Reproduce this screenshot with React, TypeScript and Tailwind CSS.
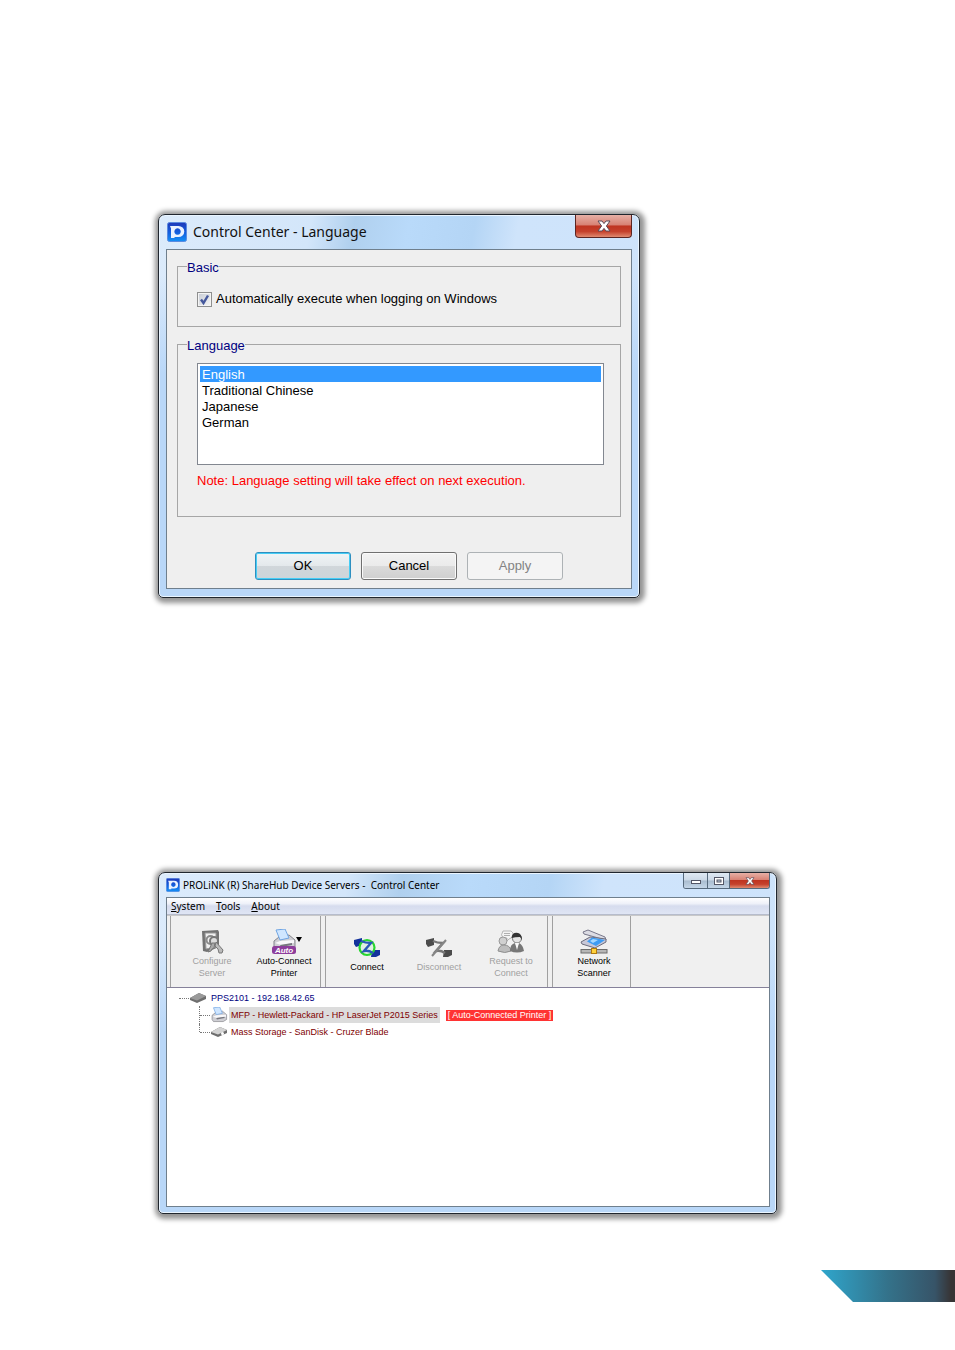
import type { ReactNode } from "react";

const windowFrame =
  "w-full border border-[#20262e] rounded-t-[7px] rounded-b-[5px] bg-[linear-gradient(180deg,transparent_0,transparent_60px,#b9d7f8_160px,#b9d7f8_100%),linear-gradient(100deg,#dcebfb_0%,#d3e6fa_28%,#b0d0ee_36%,#b9dafa_46%,#b4d5f5_58%,#cfe4fb_66%,#cde3fb_100%)] shadow-[inset_0_0_0_1px_#eaf5ff,1px_1px_5px_4px_rgba(0,0,0,0.42)]";

function LogoIcon({ className }: { className: string }) {
  return (
    <svg viewBox="0 0 20 20" className={className} aria-hidden="true">
      <defs>
        <linearGradient id="logoBlue" x1="0" y1="0" x2="0" y2="1">
          <stop offset="0" stopColor="#2038b8" />
          <stop offset="0.55" stopColor="#1260e0" />
          <stop offset="1" stopColor="#1590f5" />
        </linearGradient>
      </defs>
      <rect x="0.5" y="0.5" width="19" height="19" rx="2" fill="url(#logoBlue)" stroke="#5a8be0" />
      <path
        fill="#e9f1ff"
        fillRule="evenodd"
        d="M3 4 H11.500 A5.800 5.500 0 0 1 11.500 15 H7.500 V16 H4 V6.500 Z M10.500 6.200 A3.200 3.300 0 1 0 10.600 6.200 Z"
      />
    </svg>
  );
}

function CloseGlyph({ className }: { className: string }) {
  return (
    <svg viewBox="0 0 14 12" className={className} aria-hidden="true">
      <path
        d="M1 1 H5 L7 3.6 L9 1 H13 L9.4 6 L13 11 H9 L7 8.4 L5 11 H1 L4.6 6 Z"
        fill="#fff"
        stroke="#5a4a58"
        strokeWidth="1"
      />
    </svg>
  );
}

function ConfigureIcon() {
  return (
    <svg viewBox="0 0 26 26" className="size-[26px]" aria-hidden="true">
      <path d="M3 2 L19 1 L20 3 V18 L8 23 L4 22 Z" fill="#737373" />
      <path d="M6 4 H17 V18 L7 20 Z" fill="#efefef" stroke="#999" />
      <circle cx="11.5" cy="11" r="4" fill="none" stroke="#8a8a8a" strokeWidth="2" />
      <circle cx="15" cy="12" r="4" fill="#ddd" stroke="#777" strokeWidth="2" />
      <path d="M13 14 L9 23 L12 22 L13 20 L15 19 L16 14 Z" fill="#a9a9a9" stroke="#777" />
      <path d="M17 13 L24 21 L23 24 L20 24 L19 20 L16 17 Z" fill="#bbb" stroke="#777" />
    </svg>
  );
}

function PrinterShape() {
  return (
    <>
      <path d="M3 12 L8 8 L18 6 L24 11 V18 L19 21 H5 L3 18 Z" fill="#cfcfd4" stroke="#85858c" />
      <path d="M5 1 L14 0 L18 9 L9 11 Z" fill="#cfe6ff" stroke="#6fa4e2" />
      <path d="M4 14 L9 12 L23 11 L23 14 L10 16 Z" fill="#f8f8fa" />
      <path d="M9 16 L21 14 V16 L10 18 Z" fill="#77777f" />
    </>
  );
}

function AutoPrinterIcon() {
  return (
    <svg viewBox="0 0 26 26" className="size-[26px]" aria-hidden="true">
      <PrinterShape />
      <rect x="1" y="17" width="24" height="8" rx="2.5" fill="#8d3d9c" />
      <text x="13" y="24" textAnchor="middle" fill="#fff" className="font-['Liberation_Sans',sans-serif] text-[8px] font-bold italic">
        Auto
      </text>
    </svg>
  );
}

function LinkIcon({ connected }: { connected: boolean }) {
  const plug = connected ? "#12329c" : "#4c4c4c";
  return (
    <svg viewBox="0 0 28 26" className="h-[26px] w-[28px]" aria-hidden="true">
      <path d="M1 5 L9 3 V10 L3 12 L1 9 Z" fill={plug} />
      <path d="M19 15 L27 15 V20 L23 22 H18 Z" fill={plug} />
      {connected && <circle cx="14" cy="12.500" r="7.500" fill="#dff0e2" stroke="#27d62f" strokeWidth="2.200" />}
      <path
        d="M8 6 C12 8 15 8 18 8 L11 16 C15 15 17 16 20 18"
        fill="none"
        stroke={connected ? "#2a58b8" : "#777"}
        strokeWidth="2.400"
      />
      {!connected && <path d="M21 5 L7 21" stroke="#858585" strokeWidth="2" />}
    </svg>
  );
}

function RequestIcon() {
  return (
    <svg viewBox="0 0 28 26" className="h-[26px] w-[28px]" aria-hidden="true">
      <path d="M6 2 H14 Q17 3 16 8 L12 10 L10 12 V9 H6 Q3 6 6 2 Z" fill="#f4f4f4" stroke="#b5b5b5" />
      <path d="M7 4.500 H13 M7 6.500 H13" stroke="#b0b0b0" />
      <circle cx="6" cy="12" r="4" fill="#d0d0d0" stroke="#999" />
      <path d="M1 22 Q2 16 7 16 Q13 16 14 22 Q8 25 1 22 Z" fill="#bdbdbd" stroke="#8f8f8f" />
      <circle cx="20" cy="9.500" r="4.500" fill="#e4e4e4" stroke="#777" />
      <path d="M14.500 9 Q15 3 21 4 Q25 5 25 11 L23 8 Q18 8 14.500 9 Z" fill="#333" />
      <path d="M13 22 Q13 15 18 14 L20 18 L22 14 Q26 16 27 22 Q20 25 13 22 Z" fill="#777" />
      <path d="M18 14 L20 21 L22 14 Z" fill="#f8f8f8" />
    </svg>
  );
}

function ScannerIcon() {
  return (
    <svg viewBox="0 0 28 26" className="h-[26px] w-[28px]" aria-hidden="true">
      <path d="M3 3 L8 1 L25 8 L26 11 L22 10 L4 5 Z" fill="#dcdce4" stroke="#77778a" />
      <path d="M1 13 L10 8 L26 10 L26 13 L15 19 L2 15 Z" fill="#c8c8d8" stroke="#6c6c7c" />
      <path d="M7 12.500 L12 8.500 L25 11 L16 17 Z" fill="#3e9cf4" />
      <path d="M10 12 L13 10 L18 11 L13 14 Z" fill="#a6d8ff" />
      <rect x="1" y="20.500" width="26" height="3.500" fill="#b7b7b7" stroke="#6d6d6d" />
      <rect x="11.500" y="19.500" width="5" height="5" fill="#ffd23c" stroke="#b07a10" />
    </svg>
  );
}

function DriveIcon({ small = false }: { small?: boolean }) {
  return (
    <svg viewBox="0 0 18 12" className="h-[12px] w-[18px] shrink-0" aria-hidden="true">
      <path d="M1 6 L10 1 L17 4 V7 L8 11 L1 8 Z" fill="#6e6e6e" />
      <path d="M1 6 L10 1 L17 4 L8 8.500 Z" fill={small ? "#d4d4d4" : "#9a9a9a"} />
      {small && <circle cx="12.500" cy="7.500" r="1.500" fill="#fff" />}
    </svg>
  );
}

function GroupBox({ title, className, children }: { title: string; className: string; children: ReactNode }) {
  return (
    <fieldset className={`min-w-0 border border-[#a6a6a6] pl-[19px] pr-[16px] ${className}`}>
      <legend className="-ml-[10px] pt-1 text-[13px] leading-[16px] text-[#00007f]">{title}</legend>
      {children}
    </fieldset>
  );
}

const dialogButton = "h-[28px] w-[96px] rounded-[3px] border text-[13px] leading-[16px]";

function LanguageDialog() {
  return (
    <section
      aria-label="Control Center - Language"
      className={`${windowFrame} flex max-w-[482px] flex-col px-[7px] pb-[8px]`}
    >
      <header className="flex h-[34px] items-start justify-between">
        <div className="flex h-full items-center gap-[6px] pl-[1px]">
          <LogoIcon className="size-[20px]" />
          <h1 className="font-['Noto_Sans',sans-serif] text-[14px] leading-[18px] text-[#111]">
            Control Center - Language
          </h1>
        </div>
        <button
          type="button"
          aria-label="Close"
          className="flex h-[23px] w-[57px] items-center justify-center rounded-b-[4px] border border-t-0 border-[#5c2522] bg-[linear-gradient(#e7b0a6_0%,#d88274_45%,#bf3421_50%,#c5412c_75%,#e08a70_100%)]"
        >
          <CloseGlyph className="h-[12px] w-[14px]" />
        </button>
      </header>
      <div className="border border-[#6f7f8d] bg-[#efefef] pr-[10px] pl-[10px] pt-[6px] pb-[8px]">
        <GroupBox title="Basic" className="h-[71px]">
          <label className="flex items-center gap-[4px] pt-[15px] text-[13px] leading-[16px] text-black">
            <span className="grid size-[15px]">
              <input
                type="checkbox"
                defaultChecked
                className="peer col-start-1 row-start-1 size-[15px] appearance-none border border-[#8e8f8f] bg-[linear-gradient(135deg,#c6cbd4,#f6f6f6)] shadow-[inset_0_0_0_1px_#f4f4f4]"
              />
              <svg
                viewBox="0 0 15 15"
                className="pointer-events-none invisible col-start-1 row-start-1 size-[15px] peer-checked:visible"
                aria-hidden="true"
              >
                <path d="M4 7.500 L6.500 11 L11 3.500" fill="none" stroke="#45589c" strokeWidth="2.400" />
              </svg>
            </span>
            Automatically execute when logging on Windows
          </label>
        </GroupBox>
        <GroupBox title="Language" className="mt-[7px] h-[183px]">
          <select
            size={6}
            aria-label="Language"
            defaultValue="English"
            className="mt-[9px] block h-[102px] w-[407px] max-w-full appearance-none overflow-hidden border border-[#828790] bg-white p-[2px] text-[13px] leading-[16px] text-black outline-none"
          >
            {["English", "Traditional Chinese", "Japanese", "German"].map((name) => (
              <option
                key={name}
                className="min-h-0 px-[2px] pt-px pb-0 leading-[16px] checked:bg-[linear-gradient(#3399ff,#3399ff)] checked:text-white"
              >
                {name}
              </option>
            ))}
          </select>
          <p className="mt-[7px] text-[13px] leading-[18px] text-[#ff0000]">
            Note: Language setting will take effect on next execution.
          </p>
        </GroupBox>
        <div className="mt-[35px] flex justify-center gap-[10px] pl-5">
          <button
            type="button"
            className={`${dialogButton} border-[#2e8fc0] bg-[linear-gradient(#f0f4f6_0%,#e4e9ec_48%,#d0d6da_52%,#cdd5da_100%)] text-black shadow-[inset_0_0_0_1px_#46cdf5]`}
          >
            OK
          </button>
          <button
            type="button"
            className={`${dialogButton} border-[#707070] bg-[linear-gradient(#f2f2f2_0%,#ebebeb_48%,#dadada_52%,#cfcfcf_100%)] text-black shadow-[inset_0_0_0_1px_#fafafa]`}
          >
            Cancel
          </button>
          <button type="button" disabled className={`${dialogButton} border-[#adb2b5] bg-[#f4f4f4] text-[#838383]`}>
            Apply
          </button>
        </div>
      </div>
    </section>
  );
}

function ToolButton({
  icon,
  lines,
  disabled = false,
}: {
  icon: ReactNode;
  lines: string[];
  disabled?: boolean;
}) {
  return (
    <button
      type="button"
      disabled={disabled}
      className="flex h-full w-[72px] flex-col items-center justify-center pt-[5px] text-[9px] leading-[12px] text-black disabled:text-[#a0a0a0]"
    >
      {icon}
      {lines.map((line) => (
        <span key={line} className="whitespace-nowrap">
          {line}
        </span>
      ))}
    </button>
  );
}

function ControlCenterWindow() {
  return (
    <section
      aria-label="Control Center"
      className={`${windowFrame} flex max-w-[619px] flex-col pl-[7px] pr-[6px] pb-[6px]`}
    >
      <header className="flex h-[24px] items-start justify-between">
        <div className="flex h-full items-center gap-[3px]">
          <LogoIcon className="size-[14px]" />
          <h2 className="font-['Noto_Sans',sans-serif] text-[10px] leading-[14px] whitespace-pre text-black">
            PROLiNK (R) ShareHub Device Servers -  Control Center
          </h2>
        </div>
        <div className="flex h-[16px] overflow-hidden rounded-b-[3px] border border-t-0 border-[#56697c]">
          <button
            type="button"
            aria-label="Minimize"
            className="flex w-[23px] items-center justify-center bg-[linear-gradient(#dfe9f3_0%,#cbd8e6_48%,#a9bccf_52%,#c4d6e8_100%)] pt-[2px]"
          >
            <span className="h-[4px] w-[10px] border border-[#535666] bg-white" />
          </button>
          <button
            type="button"
            aria-label="Maximize"
            className="flex w-[23px] items-center justify-center border-x border-[#56697c] bg-[linear-gradient(#dfe9f3_0%,#cbd8e6_48%,#a9bccf_52%,#c4d6e8_100%)]"
          >
            <svg viewBox="0 0 10 8" className="h-[8px] w-[10px]" aria-hidden="true">
              <rect x="0.500" y="0.500" width="9" height="7" fill="#fff" stroke="#535666" />
              <rect x="3" y="3" width="4" height="2" fill="#c5d3e2" stroke="#535666" />
            </svg>
          </button>
          <button
            type="button"
            aria-label="Close"
            className="flex w-[39px] items-center justify-center bg-[linear-gradient(#e7b0a6_0%,#d88274_45%,#bf3421_50%,#c5412c_75%,#e08a70_100%)]"
          >
            <CloseGlyph className="h-[8px] w-[10px]" />
          </button>
        </div>
      </header>
      <div className="flex flex-col border border-[#6f7f8d] bg-[#f0f0f0]">
        <nav className="flex h-[17px] items-center gap-[11px] border-b border-[#b6bccc] bg-[linear-gradient(#ffffff_0%,#eef1f9_35%,#d6dcee_50%,#dfe5f4_100%)] pl-[4px] font-['Noto_Sans',sans-serif] text-[10px] leading-[14px] text-black">
          <button type="button">
            <u>S</u>ystem
          </button>
          <button type="button">
            <u>T</u>ools
          </button>
          <button type="button">
            <u>A</u>bout
          </button>
        </nav>
        <div role="toolbar" aria-label="Devices" className="flex h-[72px] border-t border-[#c8c8c8] pl-[3px]">
          <div className="flex border-x border-[#a0a0a0] pl-[5px]">
            <ToolButton icon={<ConfigureIcon />} lines={["Configure", "Server"]} disabled />
            <ToolButton
              icon={
                <span className="relative">
                  <AutoPrinterIcon />
                  <span className="absolute top-[8px] left-[25px] border-x-[3px] border-t-[5px] border-x-transparent border-t-black" />
                </span>
              }
              lines={["Auto-Connect", "Printer"]}
            />
          </div>
          <div className="ml-[4px] flex border-x border-[#a0a0a0] pl-[5px]">
            <ToolButton icon={<LinkIcon connected />} lines={["Connect"]} />
            <ToolButton icon={<LinkIcon connected={false} />} lines={["Disconnect"]} disabled />
            <ToolButton icon={<RequestIcon />} lines={["Request to", "Connect"]} disabled />
          </div>
          <div className="ml-[4px] flex border-x border-[#a0a0a0] pl-[5px]">
            <ToolButton icon={<ScannerIcon />} lines={["Network", "Scanner"]} />
          </div>
        </div>
        <div className="h-[219px] border-t border-[#85819a] bg-white pt-[2px] pl-[12px] text-[9px] leading-[16px] whitespace-nowrap">
          <div className="flex h-[16px] items-center text-[#000080]">
            <span className="w-[10px] border-t border-dotted border-[#777]" />
            <DriveIcon />
            <span className="pl-[4px]">PPS2101 - 192.168.42.65</span>
          </div>
          <ul className="ml-[20px] text-[#800000]">
            <li className="flex h-[18px] items-center">
              <span className="h-full border-l border-dotted border-[#777]" />
              <span className="w-[10px] border-t border-dotted border-[#777]" />
              <svg viewBox="0 0 26 23" className="h-[16px] w-[18px]" aria-hidden="true">
                <PrinterShape />
              </svg>
              <span className="ml-[1px] bg-[#dcdcdc] px-[2px]">MFP - Hewlett-Packard - HP LaserJet P2015 Series</span>
              <span className="ml-[6px] bg-[#ff3333] px-[2px] leading-[11px] text-white">
                [ Auto-Connected Printer ]
              </span>
            </li>
            <li className="flex h-[16px] items-center">
              <span className="h-[8px] self-start border-l border-dotted border-[#777]" />
              <span className="w-[10px] border-t border-dotted border-[#777]" />
              <DriveIcon small />
              <span className="ml-[1px] px-[2px]">Mass Storage - SanDisk - Cruzer Blade</span>
            </li>
          </ul>
        </div>
      </div>
    </section>
  );
}

export default function App() {
  return (
    <main className="min-h-screen overflow-hidden bg-white pt-[214px] pb-[48px] font-['Liberation_Sans',Arial,sans-serif]">
      <div className="px-[158px]">
        <LanguageDialog />
        <div className="mt-[274px]">
          <ControlCenterWindow />
        </div>
      </div>
      <div className="mt-[56px] ml-auto h-[32px] w-[134px] bg-[linear-gradient(90deg,#2fa6cc_0%,#34728a_50%,#375468_85%,#373435_97%)] [clip-path:polygon(0_0,100%_0,100%_100%,32px_100%)]" />
    </main>
  );
}
